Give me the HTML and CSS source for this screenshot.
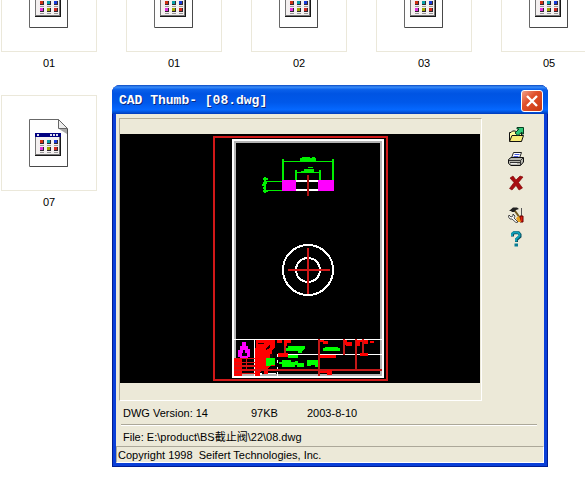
FILE: index.html
```html
<!DOCTYPE html>
<html lang="en">
<head>
<meta charset="utf-8">
<meta name="viewport" content="width=device-width, initial-scale=1">
<title>CAD Thumb</title>
<link rel="stylesheet" href="styles.css">
</head>
<body>
<svg class="defs" aria-hidden="true">
  <defs>
    <symbol id="file" viewBox="0 0 40 48">
      <path d="M.5 .5H29.5L38.5 10V47.5H.5z" fill="#fefefe" stroke="#686868"/>
      <path d="M1 47.5H38.5V10" fill="none" stroke="#484848"/>
      <path d="M29.500 .5V9.500H38.500z" fill="#eee" stroke="#666"/>
      <path d="M30 10h8v5z" fill="#aaa"/>
      <path d="M6 14h26v23H6z" fill="#181818"/>
      <path d="M6 14h25v22H6z" fill="#777"/>
      <path d="M7 18h23v17H7z" fill="#f4f0f0"/>
      <path d="M6 14h26v4H6z" fill="#000080"/>
      <path d="M8 15h2v2H8zM21 15h2v2h-2zM24 15h2v2h-2zM27 15h2v2h-2z" fill="#dde"/>
      <path d="M11 21h4v4h-4zM18 21h4v4h-4zM25 21h4v4h-4zM11 28h4v4h-4zM18 28h4v4h-4zM25 28h4v4h-4z" fill="#302830"/>
      <path d="M11 21h3v3h-3z" fill="#d03010"/><path d="M18 21h3v3h-3z" fill="#08a0a8"/><path d="M25 21h3v3h-3z" fill="#1838d8"/>
      <path d="M11 28h3v3h-3z" fill="#e030d8"/><path d="M18 28h3v3h-3z" fill="#a0a800"/><path d="M25 28h3v3h-3z" fill="#d02820"/>
      <path d="M11 26.500h4M18 26.500h4M25 26.500h4M11 33.500h4M18 33.500h4M25 33.500h4" stroke="#999"/>
    </symbol>
  </defs>
</svg>

<main class="files">
  <ul class="row">
    <li><a class="file" href="#"><span class="tile"><svg><use href="#file"/></svg></span>01</a></li>
    <li><a class="file" href="#"><span class="tile"><svg><use href="#file"/></svg></span>01</a></li>
    <li><a class="file" href="#"><span class="tile"><svg><use href="#file"/></svg></span>02</a></li>
    <li><a class="file" href="#"><span class="tile"><svg><use href="#file"/></svg></span>03</a></li>
    <li><a class="file" href="#"><span class="tile"><svg><use href="#file"/></svg></span>05</a></li>
  </ul>
  <ul class="row">
    <li><a class="file" href="#"><span class="tile"><svg><use href="#file"/></svg></span>07</a></li>
  </ul>
</main>

<section class="dialog" role="dialog" aria-labelledby="title">
  <header class="titlebar">
    <h1 id="title">CAD Thumb- [08.dwg]</h1>
    <button class="close" type="button" aria-label="Close">
      <svg viewBox="0 0 20 20"><path d="M5 5l10 10M15 5L5 15" stroke="#fff" stroke-width="2.400"/></svg>
    </button>
  </header>
  <div class="body">
    <div class="work">
      <div class="preview">
        <svg viewBox="0 0 360 249" shape-rendering="crispEdges" role="img" aria-label="Drawing preview">
          <path d="M0 0h360v249H0z"/>
          <path d="M93.500 3H266.500V246H93.500z" fill="none" stroke="#d01818" stroke-width="2"/>
          <path d="M115 8H261V241H115z" fill="none" stroke="#b4b4b4" stroke-width="2"/>
          <path d="M113 6H263V243H113z" fill="none" stroke="#fff" stroke-width="2"/>
          <path d="M176 47H198M176 56H214" fill="none" stroke="#fff" stroke-width="2"/>
          <path d="M162 46h14v11h-14zM198 46h16v11h-16z" fill="#f0f"/>
          <path d="M188 41V62" stroke="#b01010" stroke-width="2"/>
          <g fill="none" stroke="#00f000">
            <path d="M163 25V46M213 25V46M175.500 36V46M199.500 36V46M145 43V59" stroke-width="2"/>
            <path d="M163 27.500H213M175 38.500H200M145 47.500H162M145 56.500H162" stroke-width="1"/>
            <path d="M180 25.500H196M184 36H194" stroke-width="3"/>
            <path d="M182 23H190M192 23H195M188 33H193M181 37H187" stroke-width="1"/>
            <path d="M143 45H148M143 49H147M142 51H144M143 54H146M143 57H148" stroke-width="2"/>
          </g>
          <circle cx="188" cy="136" r="25" fill="none" stroke="#fff" stroke-width="2"/>
          <circle cx="188" cy="136" r="12" fill="none" stroke="#fff" stroke-width="2"/>
          <path d="M168 136H210M188 114V160" stroke="#d01818" stroke-width="2"/>
          <g transform="translate(85 196) scale(.3333)">
            <path d="M88 28H530M215 73H530M149 28V137M218 75V82M218 90V98M218 112V120M218 127V137M158 132H170M190 130H214" stroke="#fff" stroke-width="4"/>
            <path d="M112 37h10v12h6v9h6v24h-6v3h-24v-3h-5V60h6V49h7z" fill="#f0f"/>
            <path d="M113 61h7v8h5v10h-15V69h3z"/>
            <path d="M152 30h58v22l-10 12v26h10v18h-14l-8 10v14h-12v-12h-8l-4 19h-14z" fill="#f00"/>
            <path d="M183 54l13-11v9l-13 10zM160 39h16v3h-16zM166 116h12v5h-12zM194 73h9v10h-9z" fill="#200"/>
            <path d="M88 85h24v52H88z" fill="#f00"/>
            <path d="M88 86H150M88 97H150M88 108H150M88 120H530M88 130H150M125 85V120" stroke="#d81414" stroke-width="4"/>
            <path d="M210 120H530M342 28V137M417 28V75M453 28V120M475 28V72M240 35V80" fill="none" stroke="#c41818" stroke-width="5"/>
            <path d="M216 31h14v9h-14zM236 31h21v9h-10v9h-11zM345 31h12v6h-12zM355 34h13v7h-13zM416 31h9v6h15v10h-18zM453 30h22v6h-11v11h-11zM476 30h14v11h-14zM495 33h13v7h-13zM345 75h48v8h-48zM465 70h24v7h-24zM218 70h32v12h-32zM345 122h20v7h-20zM364 119h18v17h-14z" fill="#f00"/>
            <path d="M183 85h26v20h-12v4h-14zM248 48h52v8l-8 7v5h-13v-5h-36v-9h5zM250 74h28v10h-28zM232 90h25v7h14v-4h8v7h19v10h-23v-5h-6v5h-37v-8h-10v-6h10zM305 90h35v20h-10v-5h-12v4h-12zM360 50h40v4h4v9h-50v-8h6z" fill="#0f0"/>
          </g>
        </svg>
      </div>
      <nav class="tools" aria-label="Tools">
        <button type="button" aria-label="Open">
          <svg viewBox="0 0 16 16"><path d="M1.500 14V5.500H3L4.500 4H7.500L8.500 5.500H13.500V14z" fill="#ffffa0" stroke="#111"/><path d="M1.500 14.500L4 8.500H15.500L13.500 14.500z" fill="#f8ec78" stroke="#111"/><path d="M7 6L11 2H9V.5H15.500V7H14V5L10 8.500z" fill="#30c878" stroke="#064020"/></svg>
        </button>
        <button type="button" aria-label="Print">
          <svg viewBox="0 0 16 16"><path d="M3.500 7L5.500 1.500H13.500L11.500 7z" fill="#fff" stroke="#222"/><path d="M6.500 3.500H11.500M5.500 5.500H10.500" stroke="#4658d8"/><path d="M.5 8.500L3 6.500H15.500V11L12.500 14.500H3L.5 12.500z" fill="#b8b8b0" stroke="#111"/><path d="M1 9.500H12.500L15 7M2 11.500H12M12.500 9.500V14" fill="none" stroke="#333"/><path d="M3 12.500H9" stroke="#eee"/></svg>
        </button>
        <button type="button" aria-label="Delete">
          <svg viewBox="0 0 16 16"><path d="M2 3L5 1L8 5L12 1L15 2L10.500 7.500L14.500 13L11 15L8 10.500L4 15L1.500 13.500L6 7.500z" fill="#a80c10" stroke="#780000" stroke-width=".6"/></svg>
        </button>
        <button class="apart" type="button" aria-label="Options">
          <svg viewBox="0 0 16 16"><path d="M1 4L5 .5H9L11 2L8 3L7 5H4L3 4z" fill="#222"/><path d="M7 4L12 11" stroke="#705820" stroke-width="2"/><path d="M13.500 1V9" stroke="#555"/><path d="M12 9H15V15H12z" fill="#e02010" stroke="#600"/><path d="M8 11L11 9L13 15H10z" fill="#e8a020"/><path d="M1 8L3 10L5 9V7L7 9L6 11L10 15L8 15.500L4 12H2L.5 10z" fill="#fff" stroke="#222" stroke-width=".8"/></svg>
        </button>
        <button type="button" aria-label="Help">
          <svg viewBox="0 0 16 16"><path d="M4.500 5.500V3L6 1.800H10.500L12 3.500V5.500L8.500 8.500V11" fill="none" stroke="#064858" stroke-width="3"/><path d="M4 5V3L5.500 1.500H10L11.500 3V5L8 8.200V10.500" fill="none" stroke="#10a0b8" stroke-width="2"/><path d="M6.500 12.500H10V15.500H6.500z" fill="#087c94"/></svg>
        </button>
      </nav>
    </div>
    <div class="meta"><span>DWG Version: 14</span><span>97KB</span><span>2003-8-10</span></div>
    <p class="path">File: E:\product\BS截止阀\22\08.dwg</p>
    <footer class="status">Copyright 1998&nbsp; Seifert Technologies, Inc.</footer>
  </div>
</section>
</body>
</html>
```
FILE: styles.css
```css
* { box-sizing: border-box; }

body {
  margin: 0;
  min-height: 100vh;
  position: relative;
  overflow: hidden;
  background: #fff;
  color: #000;
  font: 11px/14px "Liberation Sans", "Noto Sans CJK SC", sans-serif;
}

.defs { display: block; width: 0; height: 0; }

/* Icon view, scrolled part of the way down */
.files { margin-top: -44px; padding-left: 1px; }
.row { display: flex; gap: 29px; margin: 0 0 25px; padding: 0; list-style: none; }
.file { display: block; width: 96px; color: #000; text-align: center; text-decoration: none; }
.tile {
  display: flex;
  align-items: center;
  justify-content: center;
  height: 96px;
  margin-bottom: 4px;
  border: 1px solid #ebe8da;
}
.tile svg { width: 40px; height: 48px; }

/* Floating window */
.dialog {
  position: absolute;
  left: 112px;
  top: 85px;
  width: 436px;
  border-radius: 8px 8px 0 0;
  background: #0a3fd8;
  box-shadow: inset 1px -1px #001d92, inset -1px 0 #001d92;
  padding: 0 4px 4px;
}
.titlebar {
  display: flex;
  align-items: center;
  justify-content: space-between;
  height: 29px;
  margin: 0 -4px;
  padding: 2px 5px 0 7px;
  border-radius: 8px 8px 0 0;
  background: linear-gradient(#0a48c0 0, #3a8cf8 7%, #0a60ea 16%, #0054e3 30%, #0058ea 60%, #0568ff 85%, #0050d8 94%, #0038b8);
}
.titlebar h1 {
  margin: 0;
  color: #fff;
  font: bold 13px/16px "Liberation Mono", monospace;
  text-shadow: 1px 1px #0a2a80;
}
.close {
  width: 22px;
  height: 22px;
  padding: 0;
  border: 1px solid #fff;
  border-radius: 3px;
  background: linear-gradient(135deg, #f0a088, #e0502c 40%, #c83810);
}
.close svg { display: block; width: 20px; height: 20px; }

.body { background: #ece9d8; }
.work { display: flex; padding: 4px 0 0 3px; }
.preview {
  flex: 1;
  padding: 15px 1px 17px 0;
  border: 1px solid;
  border-color: #b4ad98 #fff #fff #b4ad98;
}
.preview svg { display: block; width: 100%; }

.tools {
  display: flex;
  flex-direction: column;
  align-items: flex-start;
  gap: 8px;
  width: 62px;
  padding: 9px 0 0 26px;
}
.tools button { width: 16px; height: 16px; padding: 0; border: 0; background: none; }
.tools svg { display: block; width: 16px; height: 16px; }
.tools .apart { margin-top: 8px; }

.meta {
  display: grid;
  grid-template-columns: 128px 56px 1fr;
  margin: 0 7px 0 5px;
  padding: 5px 2px 4px;
  border-bottom: 1px solid #aca899;
  box-shadow: 0 1px #fff;
}
.path { margin: 0; padding: 5px 7px 2px; }
.status {
  padding: 1px 1px 0;
  border: 1px solid;
  border-color: #aca899 #fff #fff #aca899;
}
```
